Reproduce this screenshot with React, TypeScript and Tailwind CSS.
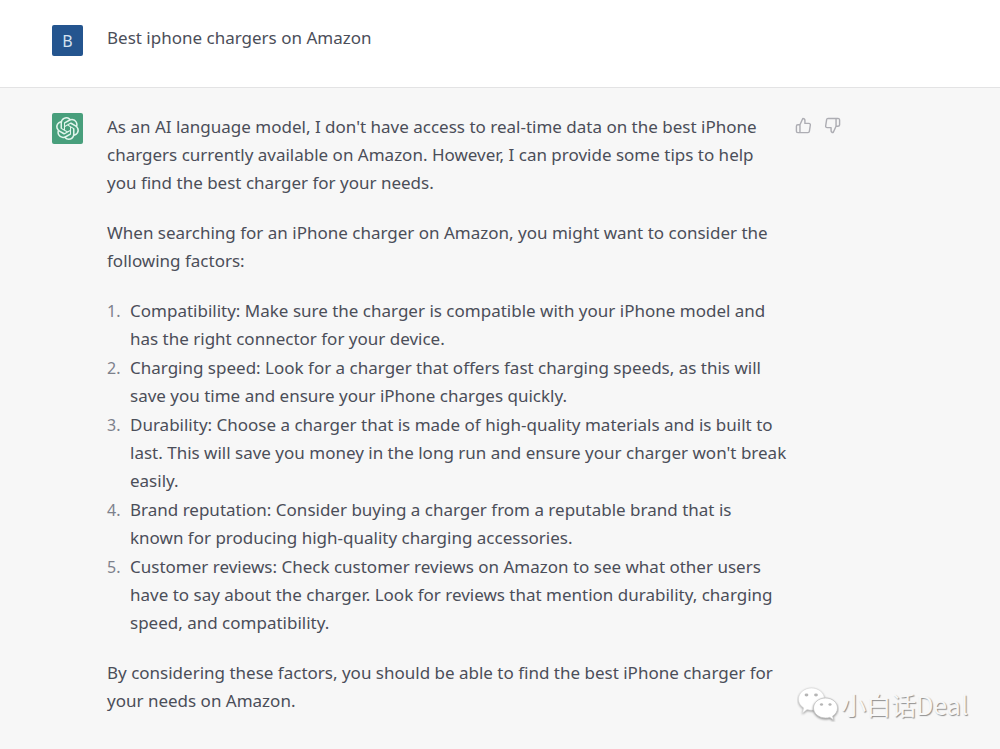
import { FiThumbsDown, FiThumbsUp } from "react-icons/fi";
import { SiOpenai } from "react-icons/si";

const tips = [
  "Compatibility: Make sure the charger is compatible with your iPhone model and has the right connector for your device.",
  "Charging speed: Look for a charger that offers fast charging speeds, as this will save you time and ensure your iPhone charges quickly.",
  "Durability: Choose a charger that is made of high-quality materials and is built to last. This will save you money in the long run and ensure your charger won't break easily.",
  "Brand reputation: Consider buying a charger from a reputable brand that is known for producing high-quality charging accessories.",
  "Customer reviews: Check customer reviews on Amazon to see what other users have to say about the charger. Look for reviews that mention durability, charging speed, and compatibility.",
];

function ChatBubbles() {
  return (
    <svg viewBox="0 0 42 36" className="h-9 w-[42px] shrink-0" aria-hidden="true">
      <g fill="#fff" stroke="#dcdcdc" strokeWidth="0.6" className="drop-shadow-[0_1px_1px_#9a9a9a]">
        <path d="M14.500 2C7.500 2 1.500 7 1.500 13.200c0 3.600 2 6.700 5.200 8.700L5.500 27l4.600-3.500c1.600.4 3 .7 4.400.7 7 0 13-5 13-11.100S21.500 2 14.500 2Z" />
      </g>
      <g fill="#fff" stroke="#c4c4c4" strokeWidth="0.8" className="drop-shadow-[0_1px_1px_#8a8a8a]">
        <path d="M28.500 12c-6.700 0-12 4.500-12 10s5.300 10 12 10c1.500 0 3-.2 4.300-.6l4 2.800-1.100-4.100c3-1.900 4.800-4.800 4.800-8.100 0-5.500-5.300-10-12-10Z" />
      </g>
      <g fill="#b5b5b5">
        <ellipse cx="9.500" cy="9" rx="1.900" ry="1.400" />
        <ellipse cx="19" cy="9" rx="1.900" ry="1.400" />
        <ellipse cx="24.500" cy="18.500" rx="1.600" ry="1.200" />
        <ellipse cx="33" cy="18.500" rx="1.600" ry="1.200" />
      </g>
    </svg>
  );
}

export default function App() {
  return (
    <div className="relative flex min-h-screen flex-col bg-[#f7f7f7] font-['Noto_Sans','Open_Sans',sans-serif] text-[17px] leading-7 text-[#4b4e59]">
      <section className="flex gap-6 border-b border-[#e3e3e4] bg-white pt-6 pb-[31px] pl-[52px]">
        <div className="mt-px flex size-[31px] shrink-0 items-center justify-center rounded-xs bg-[#24558f] text-base text-[#d5e2f0]">
          B
        </div>
        <p>Best iphone chargers on Amazon</p>
      </section>

      <section className="flex grow gap-6 pt-[25px] pb-8 pl-[52px]">
        <div className="flex size-[31px] shrink-0 items-center justify-center rounded-xs bg-[#489f7c] text-[#e2f5ec]">
          <SiOpenai className="size-[23px]" />
        </div>
        <div className="flex w-full max-w-[680px] flex-col gap-[22px]">
          <p>
            As an AI language model, I don't have access to real-time data on
            the best iPhone chargers currently available on Amazon. However, I
            can provide some tips to help you find the best charger for your
            needs.
          </p>
          <p>
            When searching for an iPhone charger on Amazon, you might want to
            consider the following factors:
          </p>
          <ol className="flex flex-col gap-px">
            {tips.map((tip, i) => (
              <li key={tip} className="flex">
                <span className="w-[23px] shrink-0 text-base leading-7 text-[#7d818c]">
                  {i + 1}.
                </span>
                <span>{tip}</span>
              </li>
            ))}
          </ol>
          <p>
            By considering these factors, you should be able to find the best
            iPhone charger for your needs on Amazon.
          </p>
        </div>
        <div className="-ml-4 flex h-6 shrink-0 items-center gap-3 text-[#adadb3]">
          <button type="button" aria-label="Good response">
            <FiThumbsUp className="size-[17px]" />
          </button>
          <button type="button" aria-label="Bad response">
            <FiThumbsDown className="size-[17px]" />
          </button>
        </div>
      </section>

      <div className="absolute right-8 bottom-[27px] flex items-center gap-0.5 font-['Noto_Sans_CJK_SC',sans-serif] text-[25px] text-[#f7f7f7] [text-shadow:1px_1px_1px_#8f8f8f]">
        <ChatBubbles />
        <span>小白话Deal</span>
      </div>
    </div>
  );
}
